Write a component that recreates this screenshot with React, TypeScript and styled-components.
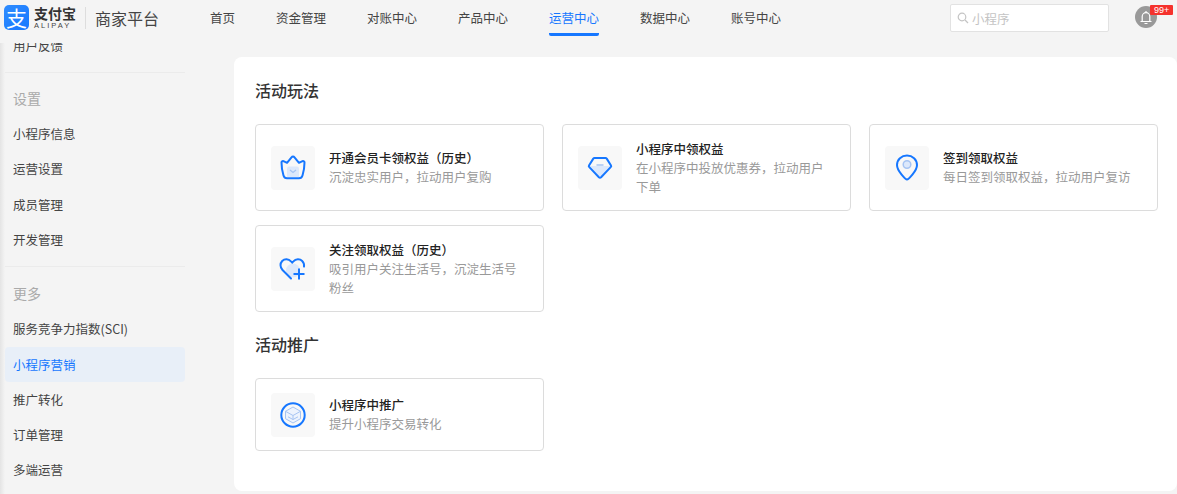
import React from "react";
import styled, { createGlobalStyle } from "styled-components";

const GlobalStyle = createGlobalStyle`
    html, body {
        margin: 0;
        padding: 0;
        background-color: #f4f4f4;
        font-family: "Noto Sans CJK SC", "Liberation Sans", sans-serif;
        text-spacing-trim: space-all;
    }
`;

const Page = styled.div`
    width: 1177px;
    height: 494px;
    overflow: hidden;
    display: flex;
    flex-direction: column;
    background-color: #f4f4f4;
`;

const Header = styled.header`
    height: 43px;
    flex-shrink: 0;
    display: flex;
    align-items: flex-start;
    padding-left: 4px;
`;

const Brand = styled.div`
    width: 206px;
    height: 35px;
    display: flex;
    align-items: center;
`;

const LogoMark = styled.div`
    width: 25px;
    height: 25px;
    border-radius: 5px;
    background: linear-gradient(135deg, #2f8dff, #1677ff);
    color: #fff;
    font-size: 21px;
    line-height: 24px;
    text-align: center;
`;

const LogoWords = styled.div`
    margin-left: 5px;
    width: 46px;
    display: flex;
    flex-direction: column;
    color: #333;
`;

const LogoCn = styled.span`
    font-size: 14px;
    font-weight: 700;
    line-height: 15px;
`;

const LogoEn = styled.span`
    font-family: "Liberation Sans", sans-serif;
    font-size: 7.5px;
    line-height: 9px;
    letter-spacing: 2px;
    color: #444;
`;

const BrandDivider = styled.div`
    width: 1px;
    height: 22px;
    margin: 0 9px 0 5px;
    background-color: #ddd;
`;

const BrandName = styled.span`
    font-size: 16px;
    color: #444;
`;

const Nav = styled.nav`
    display: flex;
    gap: 41px;
`;

const NavItem = styled.a<{ $active?: boolean }>`
    height: 36px;
    box-sizing: border-box;
    padding-top: 8px;
    font-size: 12.5px;
    line-height: 20px;
    color: ${(p) => (p.$active ? "#1677ff" : "#444")};
    border-bottom: 3px solid ${(p) => (p.$active ? "#1677ff" : "transparent")};
    border-radius: 2px;
`;

const SearchBox = styled.div`
    margin-left: 169px;
    margin-top: 4px;
    width: 159px;
    height: 28px;
    box-sizing: border-box;
    display: flex;
    align-items: center;
    gap: 3px;
    padding-left: 6px;
    background-color: #fff;
    border: 1px solid #e2e2e2;
    border-radius: 2px;
    font-size: 12.5px;
    color: #c4c4c4;
`;

const Bell = styled.div`
    position: relative;
    margin-left: 26px;
    margin-top: 6px;
    width: 22px;
    height: 22px;
    border-radius: 50%;
    background-color: #999;
    display: flex;
    align-items: center;
    justify-content: center;
`;

const Badge = styled.span`
    position: absolute;
    left: 15px;
    top: -1px;
    width: 23px;
    height: 10px;
    background-color: #f5322d;
    border-radius: 1px;
    color: #fff;
    font-family: "Liberation Sans", sans-serif;
    font-size: 9px;
    line-height: 10px;
    text-align: center;
`;

const Body = styled.div`
    flex: 1;
    min-height: 0;
    display: flex;
    align-items: flex-start;
`;

const Sidebar = styled.aside`
    width: 185px;
    height: 100%;
    flex-shrink: 0;
    box-sizing: border-box;
    padding-left: 5px;
    overflow: hidden;
    background: linear-gradient(to right, #e4e4e4, #f4f4f4) no-repeat left top / 5px 100%;
`;

const SideItem = styled.div<{ $active?: boolean }>`
    height: 35.2px;
    box-sizing: border-box;
    padding-left: 8px;
    font-size: 12.5px;
    line-height: 35px;
    border-radius: 4px;
    color: ${(p) => (p.$active ? "#1677ff" : "#444")};
    background-color: ${(p) => (p.$active ? "#e8eff8" : "transparent")};
`;

// the list is scrolled, so its first row is cut by the header
const ClippedItem = styled(SideItem)`
    margin-top: -15.5px;
`;

const SideDivider = styled.div`
    height: 1px;
    margin-top: 9.5px;
    background-color: #ebebeb;
`;

const SideGroup = styled.div<{ $lower?: boolean }>`
    height: ${(p) => (p.$lower ? "44px" : "43px")};
    padding-left: 8px;
    padding-top: ${(p) => (p.$lower ? "8px" : "7px")};
    box-sizing: border-box;
    font-size: 14px;
    line-height: 36px;
    color: #aaa;
`;

const Panel = styled.main`
    margin: 14px 0 0 49px;
    width: 943px;
    height: 434px;
    box-sizing: border-box;
    padding: 20px 19px 0 21px;
    background-color: #fff;
    border-radius: 8px;
`;

const SectionTitle = styled.h2`
    margin: 0;
    font-size: 16px;
    font-weight: 500;
    line-height: 26px;
    color: #333;
`;

const CardGrid = styled.div`
    display: grid;
    grid-template-columns: repeat(3, 289px);
    column-gap: 18px;
    row-gap: 14px;
    margin: 21px 0 19px;
`;

const Card = styled.div<{ $short?: boolean }>`
    height: ${(p) => (p.$short ? "73px" : "87px")};
    box-sizing: border-box;
    display: flex;
    align-items: center;
    gap: 14px;
    padding: 0 15px;
    border: 1px solid #dcdcdc;
    border-radius: 4px;
`;

const IconBox = styled.div`
    width: 44px;
    height: 44px;
    flex-shrink: 0;
    border-radius: 4px;
    background-color: #f8f8f8;
    display: flex;
    align-items: center;
    justify-content: center;
`;

const CardText = styled.div`
    min-width: 0;
`;

const CardTitle = styled.div`
    font-size: 12.5px;
    font-weight: 500;
    line-height: 19px;
    color: #222;
`;

const CardDesc = styled.div`
    font-size: 12.5px;
    line-height: 19.5px;
    color: #999;
`;

const BLUE = "#1677ff";
const PALE = "#dce8fb";
const SOFT = "#a6c4f3";

const SearchIcon = () => (
    <svg width="12" height="12" viewBox="0 0 12 12" fill="none" stroke="#c4c4c4" strokeWidth="1.2">
        <circle cx="5" cy="5" r="3.8" />
        <path d="M8 8l3 3" />
    </svg>
);

const BellIcon = () => (
    <svg width="14" height="15" viewBox="0 0 14 15" fill="none" stroke="#fff" strokeWidth="1.2">
        <path d="M1.5 11.500h11M3.200 11.500V6.500a3.800 3.800 0 0 1 7.600 0v5" />
        <path d="M7 1v1.500M5.500 13.500h3" />
    </svg>
);

const CrownIcon = () => (
    <svg width="26" height="25" viewBox="0 0 26 25" fill="none">
        <path d="M7 13.500a2 2 0 0 1 2-2h8a2 2 0 0 1 2 2V22H7z" fill={PALE} />
        <path d="M10 15l3 2.500 3-2.500" stroke={SOFT} strokeWidth="1.300" />
        <path
            d="M1.500 7.500c0-1 1-1.700 2-1.300L7 7.800 11.500 2.300c.8-1 2.200-1 3 0L19 7.800l3.500-1.600c1-.4 2 .3 2 1.300 0 4.500-.8 9-2 13-.5 1.800-1.800 2.800-3.500 2.800H7c-1.700 0-3-1-3.500-2.800-1.200-4-2-8.500-2-13z"
            stroke={BLUE}
            strokeWidth="2"
            strokeLinejoin="round"
        />
    </svg>
);

const DiamondIcon = () => (
    <svg width="26" height="24" viewBox="0 0 26 24" fill="none">
        <path d="M3 10h20l-10 11z" fill={PALE} />
        <path d="M9.500 9h7" stroke={SOFT} strokeWidth="1.500" />
        <path
            d="M7.500 2h11c.5 0 .9.2 1.200.6l4.300 6.900c.3.500.3 1-.1 1.400l-9.800 10.300c-.6.600-1.600.6-2.200 0L2.100 10.900c-.4-.4-.4-.9-.1-1.400l4.300-6.900c.3-.4.700-.6 1.200-.6z"
            stroke={BLUE}
            strokeWidth="2"
            strokeLinejoin="round"
        />
    </svg>
);

const PinIcon = () => (
    <svg width="24" height="27" viewBox="0 0 24 27" fill="none">
        <circle cx="12" cy="10.500" r="3.800" fill={PALE} stroke={SOFT} strokeWidth="1.500" />
        <path
            d="M12 25.500c-1 0-10-8.200-10-14.500C2 5.500 6.500 1.500 12 1.500S22 5.500 22 11c0 6.300-9 14.500-10 14.500z"
            stroke={BLUE}
            strokeWidth="2"
            strokeLinejoin="round"
        />
    </svg>
);

const HeartPlusIcon = () => (
    <svg width="28" height="24" viewBox="0 0 28 24" fill="none">
        <circle cx="14" cy="13.500" r="7" fill={PALE} />
        <path
            d="M12 21.500L3.500 13C.8 10.200 1 6.300 3.200 4c2.400-2.400 6.300-2.400 8.800.4l1.200 1.200 1.200-1.200c2.500-2.800 6.400-2.800 8.800-.4 1.500 1.500 2.100 3.600 1.800 5.600"
            stroke={BLUE}
            strokeWidth="2"
            strokeLinecap="round"
        />
        <path d="M20 11.500v11M14.500 17h11" stroke={BLUE} strokeWidth="2" />
    </svg>
);

const LayersIcon = () => (
    <svg width="26" height="26" viewBox="0 0 26 26" fill="none">
        <circle cx="13" cy="13" r="11.700" stroke={BLUE} strokeWidth="2" />
        <path d="M13 5l7.500 4.300v7.400L13 21l-7.500-4.300V9.300z" fill="#edf3fd" stroke={SOFT} strokeWidth="1" />
        <path d="M5.500 9.300l7.500 4.200 7.500-4.200M8 14.800l5 2.700 5-2.700M13 13.500v4" stroke={SOFT} strokeWidth="1" />
    </svg>
);

const navItems = ["首页", "资金管理", "对账中心", "产品中心", "运营中心", "数据中心", "账号中心"];

const playCards = [
    { title: "开通会员卡领权益（历史）", desc: "沉淀忠实用户，拉动用户复购", icon: <CrownIcon /> },
    { title: "小程序中领权益", desc: "在小程序中投放优惠券，拉动用户下单", icon: <DiamondIcon /> },
    { title: "签到领取权益", desc: "每日签到领取权益，拉动用户复访", icon: <PinIcon /> },
    { title: "关注领取权益（历史）", desc: "吸引用户关注生活号，沉淀生活号粉丝", icon: <HeartPlusIcon /> },
];

const App: React.FC = () => {
    return (
        <>
            <GlobalStyle />
            <Page>
                <Header>
                    <Brand>
                        <LogoMark>支</LogoMark>
                        <LogoWords>
                            <LogoCn>支付宝</LogoCn>
                            <LogoEn>ALIPAY</LogoEn>
                        </LogoWords>
                        <BrandDivider />
                        <BrandName>商家平台</BrandName>
                    </Brand>
                    <Nav>
                        {navItems.map((item) => (
                            <NavItem key={item} $active={item === "运营中心"}>
                                {item}
                            </NavItem>
                        ))}
                    </Nav>
                    <SearchBox>
                        <SearchIcon />
                        小程序
                    </SearchBox>
                    <Bell>
                        <BellIcon />
                        <Badge>99+</Badge>
                    </Bell>
                </Header>
                <Body>
                    <Sidebar>
                        <ClippedItem>用户反馈</ClippedItem>
                        <SideDivider />
                        <SideGroup>设置</SideGroup>
                        <SideItem>小程序信息</SideItem>
                        <SideItem>运营设置</SideItem>
                        <SideItem>成员管理</SideItem>
                        <SideItem>开发管理</SideItem>
                        <SideDivider />
                        <SideGroup $lower>更多</SideGroup>
                        <SideItem>服务竞争力指数(SCI)</SideItem>
                        <SideItem $active>小程序营销</SideItem>
                        <SideItem>推广转化</SideItem>
                        <SideItem>订单管理</SideItem>
                        <SideItem>多端运营</SideItem>
                    </Sidebar>
                    <Panel>
                        <SectionTitle>活动玩法</SectionTitle>
                        <CardGrid>
                            {playCards.map((card) => (
                                <Card key={card.title}>
                                    <IconBox>{card.icon}</IconBox>
                                    <CardText>
                                        <CardTitle>{card.title}</CardTitle>
                                        <CardDesc>{card.desc}</CardDesc>
                                    </CardText>
                                </Card>
                            ))}
                        </CardGrid>
                        <SectionTitle>活动推广</SectionTitle>
                        <CardGrid>
                            <Card $short>
                                <IconBox>
                                    <LayersIcon />
                                </IconBox>
                                <CardText>
                                    <CardTitle>小程序中推广</CardTitle>
                                    <CardDesc>提升小程序交易转化</CardDesc>
                                </CardText>
                            </Card>
                        </CardGrid>
                    </Panel>
                </Body>
            </Page>
        </>
    );
};

export default App;
